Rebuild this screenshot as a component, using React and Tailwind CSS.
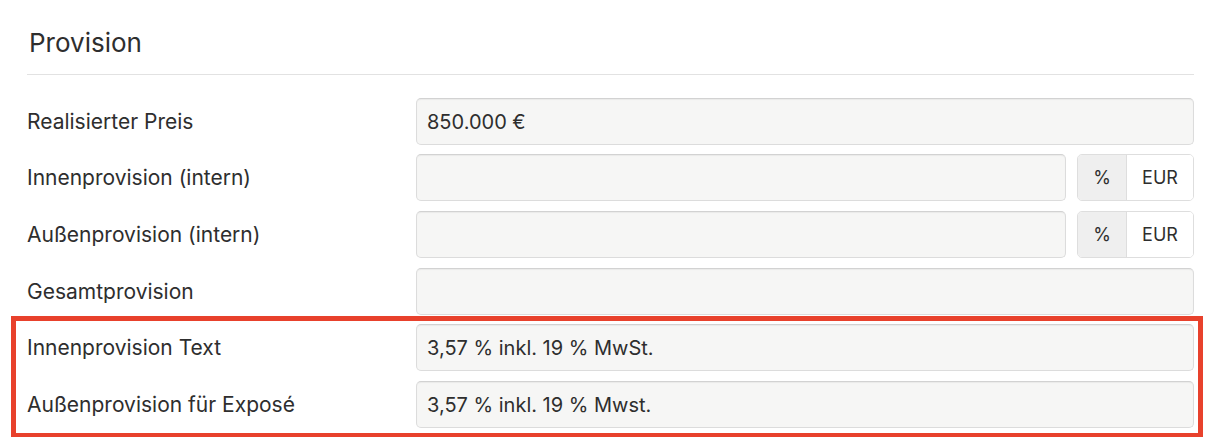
import React from "react";

const font = { fontFamily: "Inter, 'Liberation Sans', sans-serif" };

function Field({ value }) {
  return (
    <div className="flex h-[47px] flex-1 items-center rounded-[5px] border border-[#dcdcdc] border-t-[#d2d2d2] bg-[#f6f6f5] px-[10px] text-[20px] text-[#2e2e2e] shadow-[inset_0_1px_1px_rgba(0,0,0,0.05)]">
      {value}
    </div>
  );
}

function Toggle() {
  return (
    <div className="ml-[11px] flex h-[47px] w-[117px] overflow-hidden rounded-[5px] border border-[#dedede] text-[18px] text-[#2e2e2e]">
      <div className="flex w-[49px] items-center justify-center border-r border-[#dedede] bg-[#efefef]">%</div>
      <div className="flex flex-1 items-center justify-center bg-white">EUR</div>
    </div>
  );
}

function Row({ label, value, toggle, className = "" }) {
  return (
    <div className={`flex items-center ${className}`}>
      <div className="w-[389px] shrink-0 text-[21px] text-[#2e2e2e]">{label}</div>
      <div className="flex flex-1 items-center">
        <Field value={value} />
        {toggle && <Toggle />}
      </div>
    </div>
  );
}

export default function App() {
  return (
    <div className="h-[442px] w-[1208px] bg-white" style={font}>
      <div className="pl-[27px] pr-[14px]">
        <div className="flex h-[74px] items-center pl-[2px] pt-[10px] text-[26px] text-[#2e2e2e]">Provision</div>
        <div className="h-px bg-[#e2e2e2]" />
        <div className="pt-[23px]">
          <Row label="Realisierter Preis" value="850.000 €" />
          <Row className="mt-[9px]" label="Innenprovision (intern)" value="" toggle />
          <Row className="mt-[10px]" label="Außenprovision (intern)" value="" toggle />
          <Row className="mt-[10px]" label="Gesamtprovision" value="" />
          <div className="-ml-[16px] -mr-[9px] mt-[1px] border-[5px] border-b-[4px] border-[#e8412c] pb-[5px] pl-[11px] pr-[4px] pt-[3px]">
            <Row label="Innenprovision Text" value="3,57 % inkl. 19 % MwSt." />
            <Row className="mt-[10px]" label="Außenprovision für Exposé" value="3,57 % inkl. 19 % Mwst." />
          </div>
        </div>
      </div>
    </div>
  );
}
